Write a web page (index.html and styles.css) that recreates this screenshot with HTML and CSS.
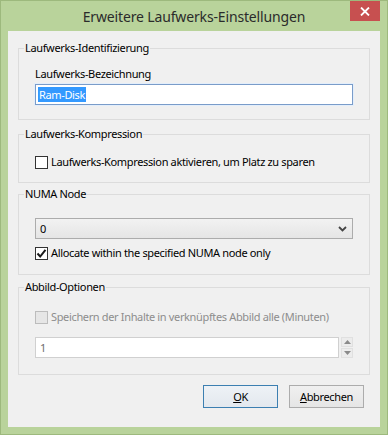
FILE: index.html
```html
<!DOCTYPE html>
<html lang="de">
<head>
<meta charset="utf-8">
<title>Erweitere Laufwerks-Einstellungen</title>
<link rel="stylesheet" href="styles.css">
</head>
<body>
<div class="window">
  <div class="titlebar">
    <span class="spacer"></span>
    <div class="title">Erweitere Laufwerks-Einstellungen</div>
    <button class="close" aria-label="Schließen">
      <svg width="10" height="9" viewBox="0 0 10 9"><path d="M1 0.5 L9 8.5 M9 0.5 L1 8.5" stroke="#fff" stroke-width="1.8" fill="none"/></svg>
    </button>
  </div>
  <div class="client">
    <fieldset class="group g1">
      <legend>Laufwerks-Identifizierung</legend>
      <div class="label">Laufwerks-Bezeichnung</div>
      <div class="textbox focused"><span class="sel">Ram-Disk</span></div>
    </fieldset>

    <fieldset class="group g2">
      <legend>Laufwerks-Kompression</legend>
      <div class="check-row">
        <span class="checkbox"></span>
        <span>Laufwerks-Kompression aktivieren, um Platz zu sparen</span>
      </div>
    </fieldset>

    <fieldset class="group g3">
      <legend>NUMA Node</legend>
      <div class="combo">
        <span>0</span>
        <svg width="9" height="6" viewBox="0 0 9 6"><path d="M1 1 L4.5 4.5 L8 1" stroke="#444" stroke-width="1.8" fill="none"/></svg>
      </div>
      <div class="check-row second">
        <span class="checkbox">
          <svg width="11" height="11" viewBox="0 0 11 11"><path d="M1.5 5.5 L4.2 8.5 L9.5 1.8" stroke="#1a1a1a" stroke-width="2" fill="none"/></svg>
        </span>
        <span>Allocate within the specified NUMA node only</span>
      </div>
    </fieldset>

    <fieldset class="group g4">
      <legend>Abbild-Optionen</legend>
      <div class="check-row disabled">
        <span class="checkbox"></span>
        <span>Speichern der Inhalte in verknüpftes Abbild alle (Minuten)</span>
      </div>
      <div class="numeric">
        <div class="textbox num">1</div>
        <div class="spin">
          <span class="spin-btn"><svg width="7" height="4" viewBox="0 0 7 4"><path d="M0 4 L3.5 0 L7 4 Z" fill="#8a8a8a"/></svg></span>
          <span class="spin-btn"><svg width="7" height="4" viewBox="0 0 7 4"><path d="M0 0 L3.5 4 L7 0 Z" fill="#8a8a8a"/></svg></span>
        </div>
      </div>
    </fieldset>

    <div class="buttons">
      <button class="btn default"><u>O</u>K</button>
      <button class="btn"><u>A</u>bbrechen</button>
    </div>
  </div>
</div>
</body>
</html>
```
FILE: styles.css
```css
* { box-sizing: border-box; }

html, body {
  margin: 0;
  padding: 0;
  background: #b9d39b;
}

body {
  font-family: "Segoe UI", "Noto Sans", sans-serif;
  font-size: 11px;
  letter-spacing: -0.35px;
  color: #000;
}

.window {
  width: 388px;
  height: 435px;
  background: #b9d39b;
  border: 1px solid #9db97d;
  padding: 0 7px 7px 7px;
  display: flex;
  flex-direction: column;
}

.titlebar {
  height: 30px;
  display: grid;
  grid-template-columns: 1fr auto 1fr;
  align-items: start;
}

.title {
  padding-top: 6px;
  line-height: 20px;
  font-size: 14px;
  letter-spacing: -0.15px;
  color: #2b2b2b;
  white-space: nowrap;
}

.close {
  justify-self: end;
  width: 30px;
  height: 20px;
  margin: 0;
  padding: 0;
  border: none;
  background: #c75050;
  display: flex;
  align-items: center;
  justify-content: center;
}

.client {
  flex: 1;
  background: #f0f0f0;
  padding: 9px 10px 0 10px;
  display: flex;
  flex-direction: column;
}

.group {
  margin: 0;
  border: 1px solid #dcdcdc;
  padding: 0 16px 0 16px;
  min-width: 0;
}

.group legend {
  margin-left: -11px;
  padding: 0 1px;
  line-height: 16px;
}

.g1 { padding-bottom: 14px; }
.g2 { margin-top: 6px; padding-bottom: 12px; }
.g3 { margin-top: 3px; padding-bottom: 13px; }
.g4 { margin-top: 4px; padding-bottom: 16px; }

.label {
  margin-top: 10px;
  line-height: 16px;
}

.textbox {
  height: 21px;
  background: #fff;
  border: 1px solid #c6c6c6;
  padding: 0 2px;
  display: flex;
  align-items: center;
  line-height: 15px;
}

.textbox.focused {
  margin-top: 2px;
  border-color: #7a9cc9;
  box-shadow: 0 0 0 1px #e3eefb;
}

.sel {
  background: #3399ff;
  color: #fff;
  padding: 0 1px;
}

.check-row {
  display: flex;
  align-items: center;
  gap: 3px;
  line-height: 16px;
}

.g2 .check-row { margin-top: 12px; }
.g3 .check-row { margin-top: 6px; }
.g4 .check-row { margin-top: 14px; }

.checkbox {
  width: 13px;
  height: 13px;
  border: 1px solid #333;
  background: #fff;
  display: flex;
  align-items: center;
  justify-content: center;
  flex: none;
}

.check-row.disabled { color: #8d8d8d; }
.check-row.disabled .checkbox {
  border-color: #bcbcbc;
  background: #e6e6e6;
}

.combo {
  margin-top: 16px;
  height: 21px;
  border: 1px solid #acacac;
  background: linear-gradient(#f2f2f2, #e5e5e5);
  display: flex;
  align-items: center;
  justify-content: space-between;
  padding: 0 5px 0 4px;
}

.numeric {
  margin-top: 12px;
  display: flex;
  gap: 2px;
}

.textbox.num {
  flex: 1;
  color: #6d6d6d;
  border-color: #d0d0d0;
  padding-left: 4px;
}

.spin {
  width: 12px;
  height: 21px;
  display: flex;
  flex-direction: column;
  gap: 1px;
}

.spin-btn {
  flex: 1;
  background: #ececec;
  border: 1px solid #e0e0e0;
  display: flex;
  align-items: center;
  justify-content: center;
}

.buttons {
  margin-top: 10px;
  display: flex;
  justify-content: flex-end;
  gap: 11px;
  padding-right: 6px;
}

.btn {
  width: 75px;
  height: 23px;
  margin: 0;
  padding: 0;
  font: inherit;
  letter-spacing: inherit;
  color: #000;
  background: linear-gradient(#f0f0f0, #e5e5e5);
  border: 1px solid #acacac;
}

.btn.default {
  border-color: #3c7fb1;
  background: linear-gradient(#eef2f6, #e3e8ee);
}
```
